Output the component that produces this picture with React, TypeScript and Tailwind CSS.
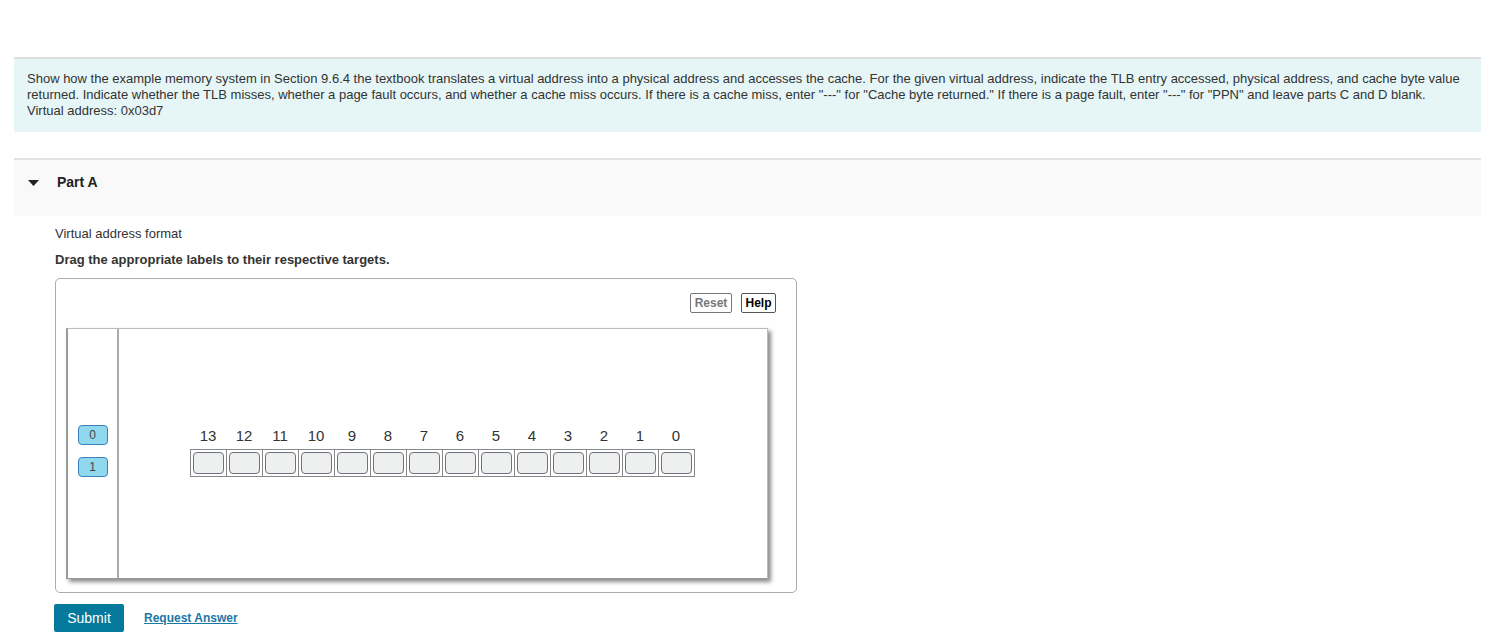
const bits = [13, 12, 11, 10, 9, 8, 7, 6, 5, 4, 3, 2, 1, 0]

function BitRow() {
  return (
    <div className="flex flex-col">
      <div className="flex">
        {bits.map((b) => (
          <div key={b} className="w-[36px] text-center text-[15px] leading-[16px] text-[#333]">
            {b}
          </div>
        ))}
      </div>
      <div className="mt-[5px] flex border-l border-[#888]">
        {bits.map((b) => (
          <div
            key={b}
            className="flex h-[28px] w-[36px] items-center justify-center border-y border-r border-[#888]"
          >
            <div className="h-[22px] w-[31px] rounded-[4px] border border-[#6d7280] bg-[#eef0f0]" />
          </div>
        ))}
      </div>
    </div>
  )
}

function Label({ value }: { value: string }) {
  return (
    <div className="flex h-[20px] w-[30px] items-center justify-center rounded-[4px] border border-[#3b80c0] bg-[#90d8ee] text-[12px] text-[#444]">
      {value}
    </div>
  )
}

export default function App() {
  return (
    <div className="min-h-screen bg-white pt-[57px] font-['Liberation_Sans',Arial,sans-serif] text-[#333]">
      <div className="ml-[14px] mr-[18px] border-t-2 border-[#dedede] bg-[#e6f6f7] px-[13px] pb-[13px] pt-[12px] text-[13px] leading-[16px]">
        <p>
          Show how the example memory system in Section 9.6.4 the textbook translates a virtual address into a
          physical address and accesses the cache. For the given virtual address, indicate the TLB entry accessed,
          physical address, and cache byte value returned. Indicate whether the TLB misses, whether a page fault
          occurs, and whether a cache miss occurs. If there is a cache miss, enter "---" for "Cache byte returned." If
          there is a page fault, enter "---" for "PPN" and leave parts C and D blank.
        </p>
        <p>Virtual address: 0x03d7</p>
      </div>

      <div className="ml-[14px] mr-[18px] mt-[26px] flex h-[58px] items-start border-t-2 border-[#e2e2e2] bg-[#f9f9f9] pt-[14px]">
        <svg width="11" height="6" viewBox="0 0 11 6" className="ml-[14px] mt-[6px]">
          <polygon points="0,0 11,0 5.5,6" fill="#222" />
        </svg>
        <span className="ml-[18px] text-[14px] font-bold leading-[16px] text-[#222]">Part A</span>
      </div>

      <div className="ml-[55px] w-[742px]">
        <p className="mt-[10px] text-[13px] leading-[16px]">Virtual address format</p>
        <p className="mt-[10px] text-[13px] font-bold leading-[16px]">Drag the appropriate labels to their respective targets.</p>

        <div className="mt-[10px] h-[315px] rounded-[5px] border border-[#ababab] bg-white">
          <div className="flex justify-end gap-[9px] pr-[20px] pt-[14px]">
            <button className="h-[20px] w-[42px] rounded-[2px] border border-[#777] bg-white text-[12px] font-bold text-[#777]">
              Reset
            </button>
            <button className="h-[20px] w-[35px] rounded-[2px] border border-[#555] bg-white text-[12px] font-bold text-black">
              Help
            </button>
          </div>

          <div className="ml-[10px] mt-[15px] flex h-[251px] w-[702px] border-b border-l-2 border-r border-t border-b-[#999] border-l-[#999] border-r-[#bbb] border-t-[#bbb] shadow-[3px_3px_4px_rgba(0,0,0,0.45)]">
            <div className="flex w-[51px] flex-col items-center gap-[12px] border-r-2 border-[#aaa] pt-[96px]">
              <Label value="0" />
              <Label value="1" />
            </div>
            <div className="pl-[71px] pt-[99px]">
              <BitRow />
            </div>
          </div>
        </div>

        <div className="mt-[11px] flex items-center">
          <button className="-ml-[1px] h-[28px] w-[70px] rounded-[2px] bg-[#04799c] text-[14px] text-white">Submit</button>
          <a href="#" className="ml-[20px] text-[12px] font-bold text-[#1b77a3] underline">
            Request Answer
          </a>
        </div>
      </div>
    </div>
  )
}
